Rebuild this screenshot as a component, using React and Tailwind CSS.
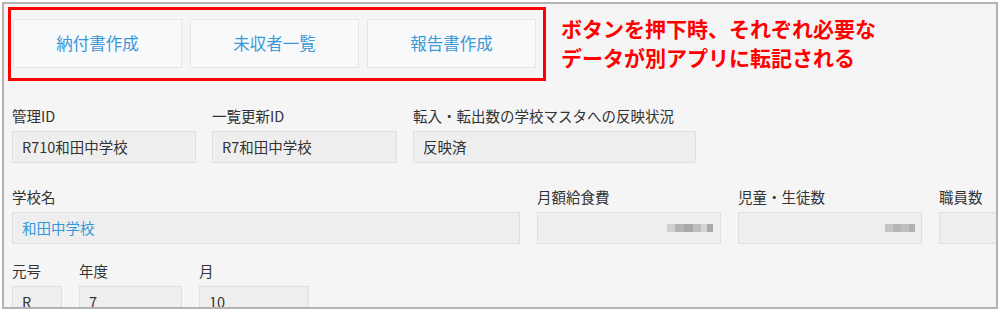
import React from "react";

const font = { fontFamily: '"Noto Sans CJK JP", "Noto Sans", sans-serif' };

const Blur = ({ widths }) => (
    <div className="flex items-center h-[10px] blur-[0.6px]">
        {widths.map((w, i) => (
            <div key={i} className={w.c} style={{ width: w.w, height: 8 }} />
        ))}
    </div>
);

const Field = ({ label, value, width, valueClass = "text-[#333333]", children }) => (
    <div className="flex flex-col shrink-0" style={{ width }}>
        <div className="h-[20px] leading-[20px] text-[14.5px] text-[#333333] whitespace-nowrap">{label}</div>
        <div className="mt-[5px] h-[32px] bg-[#eeeeee] border border-[#e0e0e0] flex items-center px-[9px]">
            {value && <span className={`text-[14.5px] leading-[20px] ${valueClass}`}>{value}</span>}
            {children}
        </div>
    </div>
);

const ActionButton = ({ label }) => (
    <button className="w-[169px] h-[49px] bg-[#f7f9fa] border border-[#e3e7e9] text-[16.5px] text-[#3b98d8] flex items-center justify-center">
        {label}
    </button>
);

export default function App() {
    return (
        <div className="w-[1000px] h-[313px] bg-white pt-[2px] pl-[2px]" style={font}>
            <div className="w-[996px] h-[307px] border-2 border-[#b3b3b3] bg-[#f5f5f5] overflow-hidden">
                {/* buttons + note */}
                <div className="flex items-start mt-[3px] ml-[4px]">
                    <div className="w-[538px] h-[74px] border-[3px] border-[#ff0000] flex gap-[8px] pl-[2px] pt-[9px] shrink-0">
                        <ActionButton label="納付書作成" />
                        <ActionButton label="未収者一覧" />
                        <ActionButton label="報告書作成" />
                    </div>
                    <div className="ml-[15px] mt-[7px] text-[21px] leading-[29px] font-bold text-[#ff0000] whitespace-nowrap">
                        <div>ボタンを押下時、それぞれ必要な</div>
                        <div>データが別アプリに転記される</div>
                    </div>
                </div>

                {/* row 1 */}
                <div className="flex gap-[16px] ml-[8px] mt-[25px]">
                    <Field label="管理ID" value="R710和田中学校" width={184} />
                    <Field label="一覧更新ID" value="R7和田中学校" width={185} />
                    <Field label="転入・転出数の学校マスタへの反映状況" value="反映済" width={283} />
                </div>

                {/* row 2 */}
                <div className="flex gap-[17px] ml-[8px] mt-[24px]">
                    <Field label="学校名" value="和田中学校" width={508} valueClass="text-[#3498db]" />
                    <Field label="月額給食費" width={184}>
                        <div className="ml-auto mr-[-2px]">
                            <Blur
                                widths={[
                                    { w: 8, c: "bg-[#d0d0d0]" },
                                    { w: 9, c: "bg-[#b4b4b4]" },
                                    { w: 9, c: "bg-[#a8a8a8]" },
                                    { w: 8, c: "bg-[#bdbdbd]" },
                                    { w: 6, c: "bg-[#d4d4d4]" },
                                    { w: 6, c: "bg-[#a9a9a9]" },
                                ]}
                            />
                        </div>
                    </Field>
                    <Field label="児童・生徒数" width={184}>
                        <div className="ml-auto mr-[-3px]">
                            <Blur
                                widths={[
                                    { w: 8, c: "bg-[#c4c4c4]" },
                                    { w: 8, c: "bg-[#b6b6b6]" },
                                    { w: 8, c: "bg-[#c0c0c0]" },
                                    { w: 6, c: "bg-[#b0b0b0]" },
                                ]}
                            />
                        </div>
                    </Field>
                    <Field label="職員数" width={184} />
                </div>

                {/* row 3 */}
                <div className="flex gap-[17px] ml-[8px] mt-[17px]">
                    <Field label="元号" value="R" width={50} />
                    <Field label="年度" value="7" width={103} />
                    <Field label="月" value="10" width={110} />
                </div>
            </div>
        </div>
    );
}
